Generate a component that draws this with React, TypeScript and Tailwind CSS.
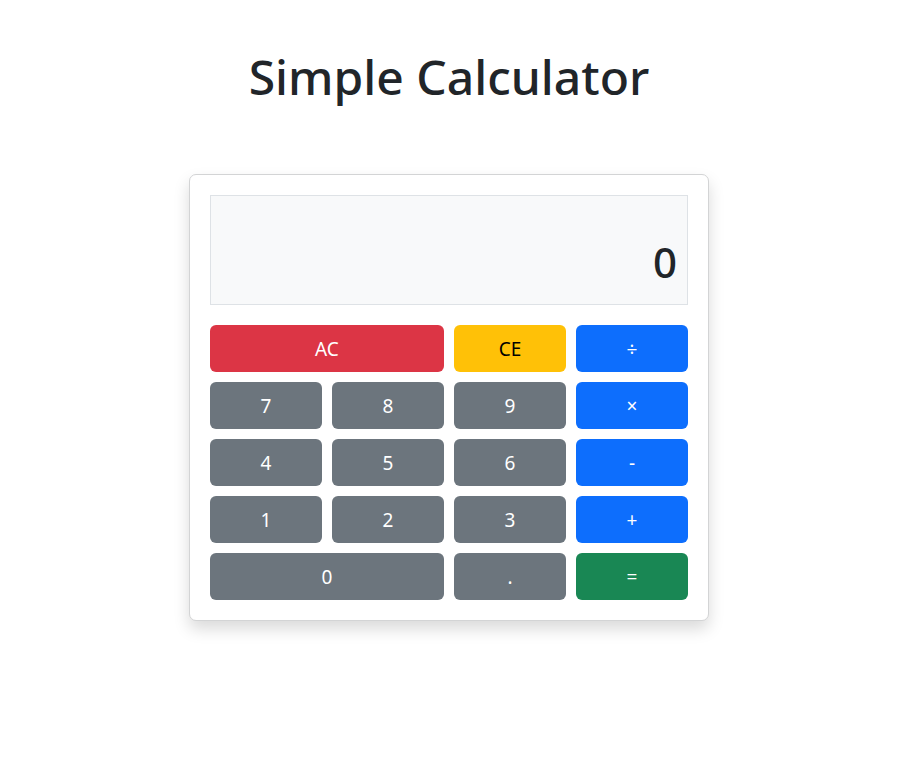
import { useState } from "react";

type Key = {
  label: string;
  value: string;
  color: string;
  span?: boolean;
};

const keys: Key[] = [
  { label: "AC", value: "AC", color: "bg-[#dc3545] text-white", span: true },
  { label: "CE", value: "CE", color: "bg-[#ffc107] text-black" },
  { label: "÷", value: "/", color: "bg-[#0d6efd] text-white" },
  { label: "7", value: "7", color: "bg-[#6c757d] text-white" },
  { label: "8", value: "8", color: "bg-[#6c757d] text-white" },
  { label: "9", value: "9", color: "bg-[#6c757d] text-white" },
  { label: "×", value: "*", color: "bg-[#0d6efd] text-white" },
  { label: "4", value: "4", color: "bg-[#6c757d] text-white" },
  { label: "5", value: "5", color: "bg-[#6c757d] text-white" },
  { label: "6", value: "6", color: "bg-[#6c757d] text-white" },
  { label: "-", value: "-", color: "bg-[#0d6efd] text-white" },
  { label: "1", value: "1", color: "bg-[#6c757d] text-white" },
  { label: "2", value: "2", color: "bg-[#6c757d] text-white" },
  { label: "3", value: "3", color: "bg-[#6c757d] text-white" },
  { label: "+", value: "+", color: "bg-[#0d6efd] text-white" },
  { label: "0", value: "0", color: "bg-[#6c757d] text-white", span: true },
  { label: ".", value: ".", color: "bg-[#6c757d] text-white" },
  { label: "=", value: "=", color: "bg-[#198754] text-white" },
];

export default function App() {
  const [display, setDisplay] = useState("0");

  const press = (v: string) => {
    if (v === "AC") return setDisplay("0");
    if (v === "CE")
      return setDisplay((d) => (d.length > 1 ? d.slice(0, -1) : "0"));
    if (v === "=") {
      try {
        // eslint-disable-next-line no-new-func
        const r = Function(`"use strict";return (${display})`)();
        setDisplay(String(r));
      } catch {
        setDisplay("Error");
      }
      return;
    }
    setDisplay((d) => (d === "0" && v !== "." ? v : d + v));
  };

  return (
    <div
      className="min-h-screen bg-white text-[#212529] flex flex-col items-center pt-[48px] pr-[19px]"
      style={{ fontFamily: '"Noto Sans", "Open Sans", sans-serif' }}
    >
      {/* HEADER */}
      <h1 className="text-[48px] leading-[1.2] font-medium">Simple Calculator</h1>

      {/* CARD */}
      <div className="mt-[68px] w-[520px] p-[20px] bg-white border border-[#d3d4d5] rounded-[7px] shadow-[0_8px_16px_rgba(0,0,0,0.15)]">
        <div className="h-[110px] mb-[20px] bg-[#f8f9fa] border border-[#dee2e6] flex items-end justify-end px-[10px] pb-[21px]">
          <span className="text-[42px] leading-none font-medium">{display}</span>
        </div>

        <div className="grid grid-cols-4 gap-[10px]">
          {keys.map((k) => (
            <button
              key={k.label}
              onClick={() => press(k.value)}
              className={`h-[47px] pt-[3px] rounded-[6px] text-[19px] leading-none ${k.color} ${
                k.span ? "col-span-2" : ""
              }`}
            >
              {k.label}
            </button>
          ))}
        </div>
      </div>
    </div>
  );
}
